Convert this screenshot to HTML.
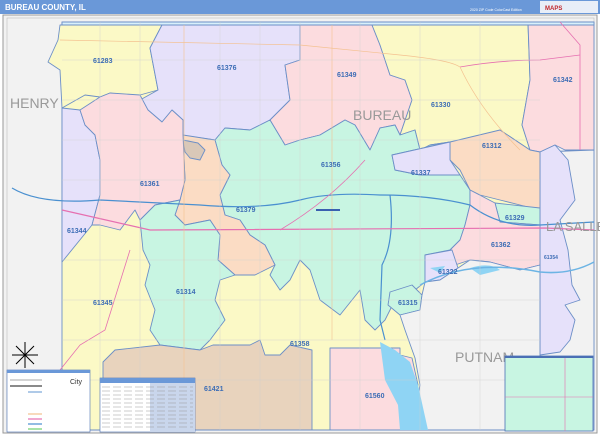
<!DOCTYPE html><html><head><style>
body{margin:0;width:600px;height:435px;overflow:hidden;background:#fff;font-family:"Liberation Sans",sans-serif}
</style></head><body>
<svg width="600" height="435" viewBox="0 0 600 435" xmlns="http://www.w3.org/2000/svg" font-family="Liberation Sans, sans-serif">
<rect x="0" y="0" width="600" height="14" fill="#6a98d8"/>
<text x="5" y="10" font-size="8" font-weight="bold" fill="#fff">BUREAU COUNTY, IL</text>
<text x="470" y="11" font-size="3.5" fill="#fff">2020 ZIP Code ColorCast Edition</text>
<rect x="540" y="1" width="58" height="12" fill="#e8eef8"/>
<text x="545" y="10" font-size="6" font-weight="bold" fill="#c0282d">MAPS</text>
<rect x="3" y="15" width="594" height="418" fill="#f2f2f2" stroke="#999" stroke-width="1"/>
<rect x="7" y="18" width="587" height="412" fill="#f2f2f2" stroke="#bbb" stroke-width="0.6"/>
<g stroke="#6c8fc7" stroke-width="0.9" stroke-linejoin="round">
<rect x="62" y="22" width="478" height="408" fill="#fbf9c6"/>
<polygon fill="#fbf9c6" points="60,25 162,25 150,48 158,90 140,95 120,95 110,93 100,97 85,95 62,108 60,70 48,62 58,40"/>
<polygon fill="#e6e1fa" points="162,25 300,25 300,60 285,65 290,100 270,120 250,130 225,128 215,140 180,135 183,120 172,110 162,122 148,110 140,100 158,90 150,48"/>
<polygon fill="#e6e1fa" points="62,108 80,110 85,125 95,135 100,160 100,195 92,225 62,262"/>
<polygon fill="#fcdcdf" points="300,25 372,25 380,45 390,75 405,80 412,100 400,135 395,125 380,128 370,150 355,125 345,120 320,135 300,140 285,145 270,120 290,100 285,65 300,60"/>
<polygon fill="#fbf9c6" points="372,25 528,25 530,80 522,125 530,150 500,130 470,140 450,142 430,145 420,150 415,130 400,135 412,100 405,80 390,75 380,45"/>
<polygon fill="#fcdcdf" points="528,22 594,22 594,150 565,150 555,145 540,152 530,150 522,125 530,80"/>
<polygon fill="#f2f2f2" points="540,152 594,150 594,430 540,430"/>
<polygon fill="#e6e1fa" points="540,152 555,145 568,160 575,200 560,220 568,250 572,285 580,300 565,305 575,320 570,340 560,352 540,355"/>
<polygon fill="#c8f5e2" points="215,140 225,128 250,130 270,120 285,145 300,140 320,135 345,120 355,125 370,150 380,128 395,125 400,135 415,130 420,150 430,145 450,142 392,155 395,170 420,175 460,175 470,190 470,205 465,225 460,240 450,250 425,255 425,282 415,290 405,300 395,300 385,320 375,330 365,320 360,290 340,315 320,300 310,270 300,260 290,280 280,290 270,275 275,265 265,245 250,235 240,220 225,215 220,195 230,175 222,165"/>
<polygon fill="#fbdcc4" points="450,142 500,130 530,150 540,152 540,210 520,205 500,200 480,195 470,190 460,170 450,160"/>
<polygon fill="#e6e1fa" points="392,155 450,142 450,160 460,175 420,175 395,170"/>
<polygon fill="#c8f5e2" points="495,203 540,208 540,225 500,222"/>
<polygon fill="#fcdcdf" points="470,190 495,203 500,222 540,225 540,265 520,270 490,262 470,260 455,265 450,250 460,240 465,225 470,205"/>
<polygon fill="#e6e1fa" points="425,255 452,250 458,268 440,280 425,282"/>
<polygon fill="#c8f5e2" points="390,292 412,285 422,295 420,310 400,315 388,305"/>
<polygon fill="#fbdcc4" points="183,135 215,140 222,165 230,175 220,195 225,215 240,220 250,235 265,245 275,265 255,275 235,275 218,260 220,235 210,220 185,225 175,215 180,200 185,180"/>
<polygon fill="#d9c8b8" points="183,140 198,143 205,150 200,160 190,158 185,152"/>
<polygon fill="#fcdcdf" points="80,110 100,97 110,93 140,95 148,110 162,122 172,110 183,120 183,135 185,180 180,200 155,205 140,220 135,210 120,230 100,225 92,225 100,195 100,160 95,135 85,125"/>
<polygon fill="#c8f5e2" points="140,220 155,205 180,200 175,215 185,225 210,220 220,235 218,260 235,275 220,280 215,300 225,320 210,340 200,350 160,345 150,330 155,310 145,285 150,265 143,250"/>
<polygon fill="#e8d3bd" points="103,362 115,350 160,345 200,350 213,345 250,345 260,340 265,355 280,355 290,345 312,350 312,430 103,430"/>
<polygon fill="#f2f2f2" points="425,282 440,280 458,268 470,260 490,262 520,270 540,265 540,430 412,430 420,385 415,358 405,330 400,315 420,310 422,295"/>
<polygon fill="#fcdcdf" points="330,348 400,348 400,355 412,358 418,385 410,400 415,430 330,430"/>
<polygon fill="#d8f0fb" stroke="#6c8fc7" points="62,22 594,22 594,25 62,25"/>
</g>
<path d="M380,342 L395,350 L410,362 L418,385 L428,430 L400,430 L398,405 L385,380 Z" fill="#8fd4f4"/>
<path d="M470,268 Q490,262 500,270 L480,275 Z M430,268 L445,266 L440,273Z" fill="#8fd4f4"/>
<path d="M420,285 Q470,258 540,272 Q570,275 594,262" stroke="#6cb4e4" stroke-width="1.5" fill="none"/>
<g fill="none" stroke-width="1.2">
<path d="M12,188 Q40,205 100,200 L200,205 Q260,210 300,200 Q330,192 380,195 Q430,195 470,205 Q500,228 540,225 L594,222" stroke="#4a90d0"/>
<path d="M390,195 Q395,240 382,265 L380,320 L385,340" stroke="#4a90d0"/>
<path d="M62,210 L150,230 L545,228 L594,230" stroke="#e66fb0"/>
<path d="M130,250 L105,330 L80,345 L60,370" stroke="#e66fb0" stroke-width="0.8"/>
<path d="M365,160 Q330,200 280,230" stroke="#e66fb0" stroke-width="0.8"/>
<path d="M460,67 Q500,60 540,60 L580,55" stroke="#e66fb0" stroke-width="0.8"/>
<path d="M560,22 L580,45 L580,150" stroke="#e66fb0" stroke-width="0.8"/>
<path d="M60,40 L300,45 L400,55 Q450,60 460,67 Q480,110 520,150" stroke="#f4c190" stroke-width="0.7"/>
<path d="M184,25 L184,430 M332,25 L332,340" stroke="#f4c190" stroke-width="0.6"/>
<path d="M316,210 L340,210" stroke="#3a60b0" stroke-width="2"/>
</g>
<g stroke="#cfcfcf" stroke-width="0.4">
<path d="M62,60 H540 M62,100 H540 M62,140 H540 M62,180 H540 M62,260 H540 M62,300 H540 M62,340 H540 M62,380 H540 M100,22 V430 M140,22 V430 M220,22 V430 M260,22 V430 M300,22 V430 M360,22 V430 M420,22 V430 M480,22 V430" fill="none"/>
</g>
<g font-size="14" fill="#999">
<text x="10" y="108">HENRY</text><text x="353" y="120">BUREAU</text><text x="546" y="231" font-size="13">LA SALLE</text><text x="455" y="362">PUTNAM</text>
</g>
<g font-size="7" fill="#3d6db5" font-weight="bold">
<text x="93" y="63">61283</text><text x="217" y="70">61376</text><text x="337" y="77">61349</text><text x="431" y="107">61330</text><text x="553" y="82">61342</text>
<text x="482" y="148">61312</text><text x="411" y="175">61337</text><text x="321" y="167">61356</text><text x="140" y="186">61361</text>
<text x="236" y="212">61379</text><text x="505" y="220">61329</text><text x="67" y="233">61344</text><text x="491" y="247">61362</text>
<text x="544" y="259" font-size="5">61354</text><text x="438" y="274">61322</text><text x="93" y="305">61345</text><text x="176" y="294">61314</text>
<text x="398" y="305">61315</text><text x="290" y="346">61358</text><text x="204" y="391">61421</text><text x="365" y="398">61560</text>
</g>
<rect x="505" y="356" width="88" height="75" fill="#c8f5e2" stroke="#4a6fb5" stroke-width="0.8"/>
<rect x="505" y="356" width="88" height="2" fill="#4a6fb5"/>
<path d="M505,397 H593 M565,358 V431" stroke="#e66fb0" stroke-width="0.6"/>
<g stroke="#000" stroke-width="1"><path d="M25,342 L25,368 M12,355 L38,355 M16,346 L34,364 M34,346 L16,364"/></g>
<rect x="7" y="370" width="83" height="62" fill="#fff" stroke="#4a6fb5" stroke-width="0.6"/>
<rect x="7" y="370" width="83" height="3" fill="#6a98d8"/>
<g stroke-width="1.2"><path d="M10,380 H42" stroke="#bbb"/><path d="M10,386 H42" stroke="#444"/><path d="M28,392 H42" stroke="#7aa6d8"/><path d="M28,414 H42" stroke="#f4c190"/><path d="M28,419 H42" stroke="#e66fb0"/><path d="M28,424 H42" stroke="#4a90d0"/><path d="M28,429 H42" stroke="#6fd06f"/></g>
<text x="70" y="384" font-size="7" fill="#333">City</text>
<rect x="100" y="378" width="95" height="54" fill="#fff" stroke="#4a6fb5" stroke-width="0.6"/>
<rect x="100" y="378" width="95" height="5" fill="#6a98d8"/>
<rect x="150" y="383" width="45" height="49" fill="#c9d6ec"/>
<g stroke="#999" stroke-width="0.5"><path d="M102,387 H193 M102,391 H193 M102,395 H193 M102,399 H193 M102,403 H193 M102,407 H193 M102,411 H193 M102,415 H193 M102,419 H193 M102,423 H193 M102,427 H193" stroke-dasharray="8 3"/></g>
</svg>
</body></html>
